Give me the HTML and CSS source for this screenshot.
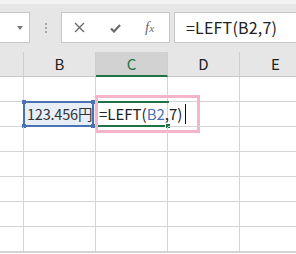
FILE: index.html
```html
<!DOCTYPE html>
<html lang="ja">
<head>
<meta charset="utf-8">
<link rel="stylesheet" href="styles.css">
</head>
<body>
<div class="app">
  <div class="topstrip"></div>
  <div class="fbar">
    <div class="namebox"><span class="caret"></span></div>
    <div class="grip"><i></i><i></i><i></i></div>
    <div class="btns">
      <svg class="ico-x" width="11" height="11" viewBox="0 0 11 11"><path d="M1 1L10 10M10 1L1 10" stroke="#6b6b6b" stroke-width="1.4" fill="none"/></svg>
      <svg class="ico-ok" width="11" height="9" viewBox="0 0 11 9"><path d="M1 4.5L4 7.5L10 1" stroke="#6b6b6b" stroke-width="2.2" fill="none"/></svg>
      <span class="fx"><i>f</i><i class="xx">x</i></span>
    </div>
    <div class="formula">=LEFT(B2,7)</div>
  </div>
  <div class="sheet">
    <div class="hd"></div>
    <div class="hd">B</div>
    <div class="hd sel">C</div>
    <div class="hd">D</div>
    <div class="hd">E</div>

    <div class="c"></div><div class="c"></div><div class="c"></div><div class="c"></div><div class="c"></div>

    <div class="c"></div>
    <div class="c ref"><span class="val">123.456円</span><span class="refbox"><b class="h1"></b><b class="h2"></b><b class="h3"></b><b class="h4"></b></span></div>
    <div class="c act">
      <span class="actbox"><b class="fill"></b></span>
      <div class="editor"><span>=LEFT(</span><span class="blue">B2</span><span>,7)</span><span class="cursor"></span></div>
    </div>
    <div class="c"></div><div class="c"></div>

    <div class="c"></div><div class="c"></div><div class="c"></div><div class="c"></div><div class="c"></div>
    <div class="c"></div><div class="c"></div><div class="c"></div><div class="c"></div><div class="c"></div>
    <div class="c"></div><div class="c"></div><div class="c"></div><div class="c"></div><div class="c"></div>
    <div class="c"></div><div class="c"></div><div class="c"></div><div class="c"></div><div class="c"></div>
    <div class="c"></div><div class="c"></div><div class="c"></div><div class="c"></div><div class="c"></div>
    <div class="c"></div><div class="c"></div><div class="c"></div><div class="c"></div><div class="c"></div>
  </div>
</div>
</body>
</html>
```
FILE: styles.css
```css
* { box-sizing: border-box; margin: 0; padding: 0; }
html, body { width: 296px; height: 254px; overflow: hidden; background: #fff; }
body { font-family: "Noto Sans CJK JP", "Noto Sans", sans-serif; color: #222; }
.app { width: 296px; height: 254px; overflow: hidden; }
.topstrip { height: 4px; background: #f3f3f3; }
.fbar {
  height: 48px; background: #e6e6e6;
  display: flex; align-items: flex-start; padding-top: 8px;
}
.namebox {
  width: 30px; height: 31px; background: #fff;
  border: 1px solid #c6c6c6; border-left: none;
  position: relative;
}
.caret {
  position: absolute; left: 17px; top: 13px;
  border-left: 3px solid transparent; border-right: 3px solid transparent;
  border-top: 4px solid #777;
}
.grip {
  width: 31px; height: 31px;
  display: flex; flex-direction: column; align-items: center; justify-content: center; gap: 2px;
}
.grip i { width: 2px; height: 2px; background: #a8a8a8; display: block; }
.btns {
  width: 109px; height: 31px; background: #fff; border: 1px solid #c6c6c6;
  display: flex; align-items: center; position: relative;
}
.ico-x { margin-left: 12px; }
.ico-ok { margin-left: 25px; margin-top: 1px; }
.fx {
  margin-left: 24px; font-family: "Liberation Serif", serif; font-style: italic;
  color: #6b6b6b; font-size: 15px; display: flex; align-items: baseline;
}
.fx .xx { font-size: 11px; margin-left: 0; }
.formula {
  margin-left: 4px; flex: 1; height: 31px; background: #fff;
  border: 1px solid #c6c6c6; border-right: none;
  padding-left: 11px; font-size: 16px; line-height: 28px; color: #222;
  white-space: nowrap; letter-spacing: 0.2px;
}
.sheet {
  display: grid;
  grid-template-columns: 24px 72px 72px 72px 72px;
  grid-template-rows: 25px repeat(7, 25px);
  width: 312px;
}
.hd {
  background: #e6e6e6; border-right: 1px solid #cfcfcf; border-bottom: 1px solid #c6c6c6;
  text-align: center; font-size: 15px; line-height: 24px; color: #222;
}
.hd.sel { background: #d2d2d2; color: #217346; border-bottom: 2px solid #217346; }
.c { border-right: 1px solid #d4d4d4; border-bottom: 1px solid #d4d4d4; position: relative; }
.ref { background: #e8eef8; }
.val { position: absolute; left: 3px; top: 0; font-size: 14.5px; line-height: 24px; color: #333; white-space: nowrap; letter-spacing: -0.2px; }
.refbox {
  position: absolute; left: -1px; top: -1px; width: 71px; height: 26px;
  border: 2px solid #4a71b2;
}
.refbox b { position: absolute; width: 4px; height: 4px; background: #4a71b2; }
.h1 { left: -3px; top: -3px; }
.h2 { right: -3px; top: -3px; }
.h3 { left: -3px; bottom: -3px; }
.h4 { right: -3px; bottom: -3px; }
.actbox {
  position: absolute; left: 1px; top: -1px; width: 72px; height: 26px;
  border-top: 2px solid #217346; border-bottom: 2px solid #217346;
}
.fill { position: absolute; right: -2px; bottom: -4px; width: 6px; height: 6px; background: #217346; border: 1px solid #fff; }
.editor {
  position: absolute; left: -1px; top: -7px; width: 105px; height: 38px;
  border: 3px solid #f4b4ca; background: transparent;
  padding-left: 1px; font-size: 15px; line-height: 30px; color: #222;
  display: flex; align-items: center; white-space: nowrap;
}
.editor .blue { color: #4a71b2; }
.cursor { width: 1px; height: 20px; background: #111; margin-left: 3px; }
```
